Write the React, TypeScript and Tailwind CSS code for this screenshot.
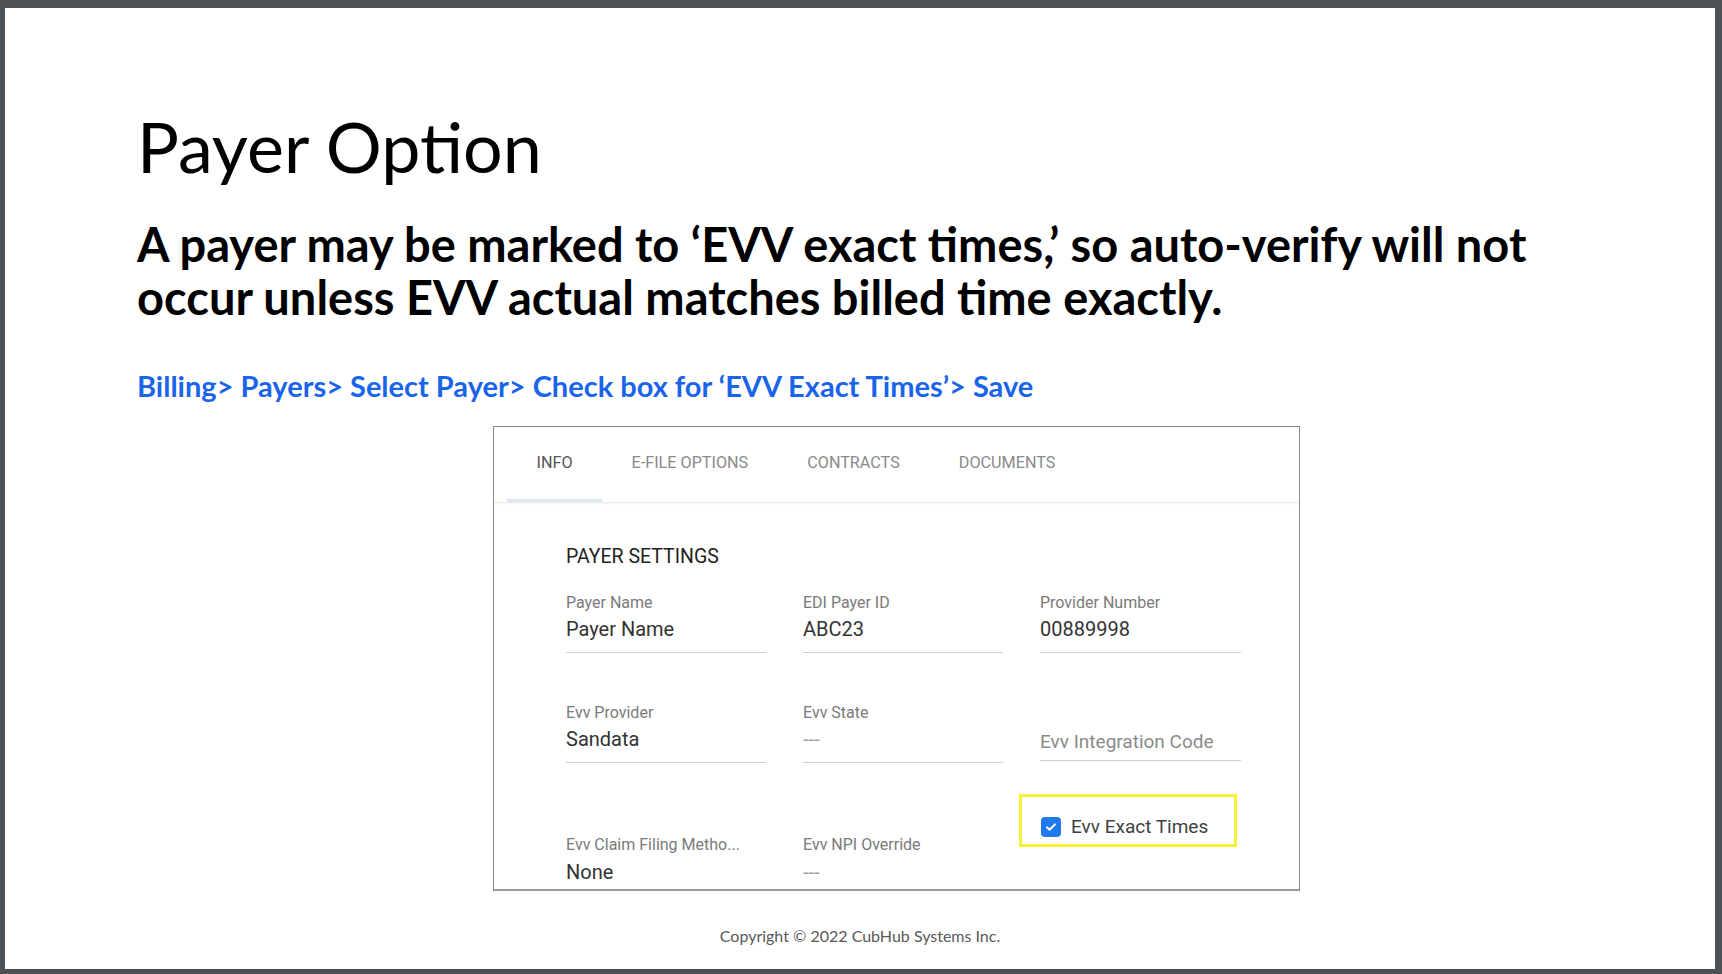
import React from 'react';

const slideFont = { fontFamily: 'Lato, "Open Sans", sans-serif' };
const appFont = { fontFamily: 'Roboto, "Noto Sans", sans-serif' };

interface FieldProps {
  label: string;
  value: string;
  muted?: boolean;
}

const Field: React.FC<FieldProps> = ({ label, value, muted }) => (
  <div className="border-b border-[#cfcfcf] pb-[10px]">
    <div className="truncate text-[16px] leading-[20px] text-[#7a7a7a]">{label}</div>
    <div
      className={
        muted
          ? 'mt-[3px] text-[20px] leading-[26px] text-[#a0a0a0]'
          : 'mt-[3px] text-[20px] leading-[26px] text-[#333]'
      }
    >
      {value}
    </div>
  </div>
);

const tabs = ['INFO', 'E-FILE OPTIONS', 'CONTRACTS', 'DOCUMENTS'];

const PayerPanel = () => (
  <div
    className="ml-[488px] h-[465px] w-[807px] overflow-hidden border border-b-2 border-[#8a8a8a] border-b-[#9a9a9a] bg-white"
    style={appFont}
  >
    <div className="flex border-b border-[#ececec] pl-[13px] shadow-[0_1px_2px_rgba(0,0,0,0.04)]">
      {tabs.map((t, i) => (
        <div key={t} className="flex flex-col">
          <div
            className={
              i === 0
                ? 'flex h-[72px] items-center px-[29.5px] text-[16.2px] text-[#555]'
                : 'flex h-[72px] items-center px-[29.5px] text-[16.2px] text-[#8a8a8a]'
            }
          >
            {t}
          </div>
          <div className={i === 0 ? 'h-[3px] bg-[#dce6f5]' : 'h-[3px]'} />
        </div>
      ))}
    </div>

    <div className="pl-[72px]">
      <div className="mt-[42px] text-[19.5px] leading-[24px] text-[#222]">PAYER SETTINGS</div>

      <div className="mt-[24px] grid grid-cols-[200px_200px_201px] gap-x-[37px]">
        <Field label="Payer Name" value="Payer Name" />
        <Field label="EDI Payer ID" value="ABC23" />
        <Field label="Provider Number" value="00889998" />
      </div>

      <div className="mt-[50px] grid grid-cols-[200px_200px_201px] items-end gap-x-[37px]">
        <Field label="Evv Provider" value="Sandata" />
        <Field label="Evv State" value="---" muted />
        <div className="mb-[2px] border-b border-[#cfcfcf] pb-[5px] text-[19px] leading-[26px] text-[#8a8a8a]">
          Evv Integration Code
        </div>
      </div>

      <div className="mt-[31px] grid grid-cols-[200px_200px_201px] items-start gap-x-[37px]">
        <div className="pt-[41px]">
          <div className="text-[16px] leading-[20px] text-[#7a7a7a]">Evv Claim Filing Metho...</div>
          <div className="mt-[4px] text-[20px] leading-[26px] text-[#333]">None</div>
        </div>
        <div className="pt-[41px]">
          <div className="text-[16px] leading-[20px] text-[#7a7a7a]">Evv NPI Override</div>
          <div className="mt-[4px] text-[20px] leading-[26px] text-[#a0a0a0]">---</div>
        </div>
        <div className="-ml-[21px] h-[53px] w-[218px] border-[3px] border-[#f6f23a] pl-[19px] pt-[20px]">
          <div className="flex h-[20px] items-center gap-[10px]">
            <svg width="20" height="20" viewBox="0 0 20 20">
              <rect x="0" y="0" width="20" height="20" rx="4" fill="#1f79ea" />
              <path d="M6 10.3l2.6 2.5L14 7.4" fill="none" stroke="#fff" strokeWidth="2" strokeLinecap="round" strokeLinejoin="round" />
            </svg>
            <span className="text-[19px] leading-[20px] text-[#3f3f3f]">Evv Exact Times</span>
          </div>
        </div>
      </div>
    </div>
  </div>
);

export default function App() {
  return (
    <div className="h-[974px] w-full bg-[#4c5156] pb-[5px] pl-[5px] pr-[7px] pt-[8px]">
      <div className="flex h-full flex-col bg-white" style={slideFont}>
        <div className="pl-[132px]">
          <h1 className="mt-[102px] text-[70px] font-normal leading-[72px] text-black">Payer Option</h1>
          <p className="mt-[36px] text-[47px] font-bold leading-[53px] text-black">
            A payer may be marked to ‘EVV exact times,’ so auto-verify will not
            <br />
            occur unless EVV actual matches billed time exactly.
          </p>
          <p className="mt-[44px] text-[29px] font-bold leading-[36px] text-[#1a64ea]">
            Billing&gt; Payers&gt; Select Payer&gt; Check box for ‘EVV Exact Times’&gt; Save
          </p>
        </div>

        <div className="mt-[22px]">
          <PayerPanel />
        </div>

        <div className="mt-[35px] text-center text-[16px] leading-[20px] text-[#595959]">
          Copyright © 2022 CubHub Systems Inc.
        </div>
      </div>
    </div>
  );
}
